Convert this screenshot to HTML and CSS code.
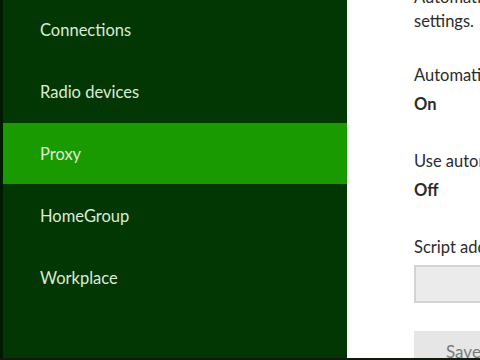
FILE: index.html
```html
<!DOCTYPE html>
<html lang="en">
<head>
    <meta charset="UTF-8" />
    <title>PC settings - Network - Proxy</title>
    <link rel="stylesheet" href="styles.css">
</head>
<body>

<div class="screen">
    <nav class="side-menu">
        <a href="#" class="menu-item">Connections</a>
        <a href="#" class="menu-item">Radio devices</a>
        <a href="#" class="menu-item selected">Proxy</a>
        <a href="#" class="menu-item">HomeGroup</a>
        <a href="#" class="menu-item">Workplace</a>
    </nav>

    <main class="content">
        <p class="intro">Automatically detect proxy<br>settings.</p>

        <div class="setting">
            <div class="setting-label">Automatically detect settings</div>
            <div class="setting-value">On</div>
        </div>

        <div class="setting">
            <div class="setting-label">Use automatic configuration script</div>
            <div class="setting-value">Off</div>
        </div>

        <div class="setting">
            <div class="setting-label">Script address</div>
            <input type="text" class="text-box">
        </div>

        <button class="save-button">Save</button>
    </main>
</div>

</body>
</html>
```

FILE: styles.css
```css
body {
    margin: 0;
    padding: 0;
    background: #fff;
    font-family: 'Lato', sans-serif;
    overflow: hidden;
}

.screen {
    display: flex;
    height: 358px;
    border-bottom: 2px solid #0d1a0d;
    overflow: hidden;
}

/* menu di sinistra */
.side-menu {
    width: 344px;
    flex-shrink: 0;
    background: #023602;
    border-left: 3px solid #001a00;
    margin-top: -1px;
}

.menu-item {
    display: block;
    height: 62px;
    line-height: 62px;
    padding-left: 37px;
    color: #dcebd6;
    font-size: 16.5px;
    text-decoration: none;
}

.menu-item.selected {
    background: #1a9a01;
    height: 61px;
    margin-bottom: 1px;
}

/* pannello destro */
.content {
    flex: 1;
    padding-left: 67px;
    color: #2b2b2b;
    font-size: 16.5px;
    white-space: nowrap;
    overflow: hidden;
}

.intro {
    margin: -15px 0 28px 0;
    line-height: 24px;
}

.setting {
    line-height: 29px;
    margin-bottom: 28px;
}

.setting-value {
    font-weight: bold;
}

.text-box {
    display: block;
    box-sizing: border-box;
    width: 200px;
    height: 38px;
    margin-top: 3px;
    background: #ebebeb;
    border: 2px solid #d3d3d3;
}

.save-button {
    display: block;
    width: 120px;
    height: 40px;
    background: #e6e6e6;
    border: none;
    color: #7a7a7a;
    font-family: 'Lato', sans-serif;
    font-size: 17px;
    text-align: left;
    padding: 0 0 0 32px;
}
```
